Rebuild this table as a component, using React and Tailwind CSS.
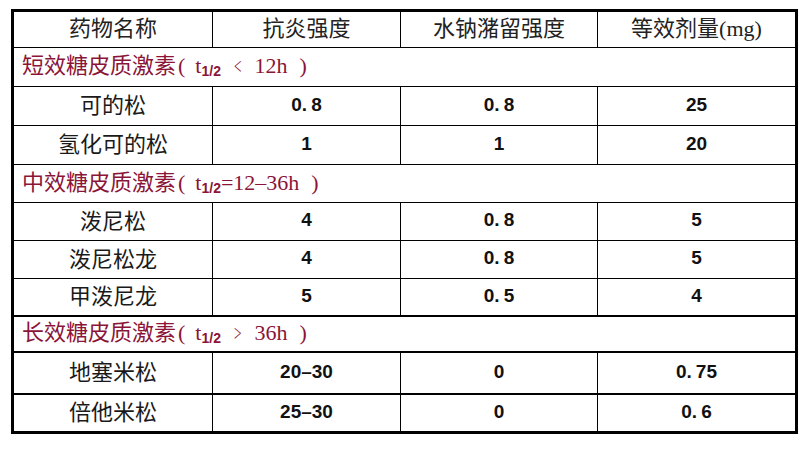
import React from "react";

const cjk = { fontFamily: '"Liberation Serif", "Noto Sans CJK SC", serif' };
const cjkSans = { fontFamily: '"Noto Sans CJK SC", sans-serif' };
const num = { fontFamily: '"Liberation Sans", "Noto Sans CJK SC", sans-serif' };

const cols = "grid grid-cols-[199px_188px_197px_197px]";

function Num({ v }) {
  if (v.includes(".")) {
    const [a, b] = v.split(".");
    return (
      <>
        {a}.<span className="ml-[4px]">{b}</span>
      </>
    );
  }
  return v;
}

function Row({ cells, h, border }) {
  return (
    <div className={`${cols} ${border}`} style={{ height: h }}>
      {cells.map((c, i) => (
        <div
          key={i}
          className={`flex items-center justify-center pb-[4px] ${i < 3 ? "border-r border-black" : ""}`}
        >
          {i === 0 ? (
            <span className="relative -top-[1px] text-[22px] leading-none text-[#1a1a1a]" style={cjkSans}>
              {c}
            </span>
          ) : (
            <span className="text-[19px] font-bold leading-none text-[#111]" style={num}>
              <Num v={c} />
            </span>
          )}
        </div>
      ))}
    </div>
  );
}

function Group({ children, h, border }) {
  return (
    <div
      className={`flex items-center pl-[8px] pb-[2px] ${border} text-[22px] leading-none text-[#8b1538]`}
      style={{ height: h, ...cjk }}
    >
      {children}
    </div>
  );
}

function Sub() {
  return (
    <span className="text-[14px] font-bold relative top-[5px]" style={num}>
      1/2
    </span>
  );
}

function Angle({ c }) {
  return (
    <span className="ml-[10px] inline-block scale-x-[0.55] text-[24px] leading-none" style={cjk}>
      {c}
    </span>
  );
}

export default function App() {
  return (
    <div className="w-[810px] h-[454px] bg-white pt-[9px] pl-[11px]">
      <div className="w-[787px] border-[3px] border-black">
        <div className={cols} style={{ height: 35 }}>
          {["药物名称", "抗炎强度", "水钠潴留强度", "等效剂量(mg)"].map((t, i) => (
            <div
              key={i}
              className={`flex items-center justify-center pb-[2px] ${i < 3 ? "border-r border-black" : ""}`}
            >
              <span className="text-[22px] leading-none text-[#222]" style={cjk}>
                {t}
              </span>
            </div>
          ))}
        </div>
        <Group h={39} border="border-t border-black">
          短效糖皮质激素<span className="ml-[2px]">(</span>
          <span className="ml-[10px]">t</span>
          <Sub />
          <Angle c="<" />
          <span className="ml-[10px]">12h</span>
          <span className="ml-[12px]">)</span>
        </Group>
        <Row h={39} border="border-t border-black" cells={["可的松", "0.8", "0.8", "25"]} />
        <Row h={39} border="border-t border-black" cells={["氢化可的松", "1", "1", "20"]} />
        <Group h={38} border="border-t border-black">
          中效糖皮质激素<span className="ml-[2px]">(</span>
          <span className="ml-[10px]">t</span>
          <Sub />
          <span>=12–36h</span>
          <span className="ml-[12px]">)</span>
        </Group>
        <Row h={38} border="border-t border-black" cells={["泼尼松", "4", "0.8", "5"]} />
        <Row h={38} border="border-t border-black" cells={["泼尼松龙", "4", "0.8", "5"]} />
        <Row h={37} border="border-t border-black" cells={["甲泼尼龙", "5", "0.5", "4"]} />
        <Group h={36} border="border-t-2 border-black">
          长效糖皮质激素<span className="ml-[2px]">(</span>
          <span className="ml-[10px]">t</span>
          <Sub />
          <Angle c=">" />
          <span className="ml-[10px]">36h</span>
          <span className="ml-[12px]">)</span>
        </Group>
        <Row h={42} border="border-t-2 border-black" cells={["地塞米松", "20–30", "0", "0.75"]} />
        <Row h={38} border="border-t-2 border-black" cells={["倍他米松", "25–30", "0", "0.6"]} />
      </div>
    </div>
  );
}
